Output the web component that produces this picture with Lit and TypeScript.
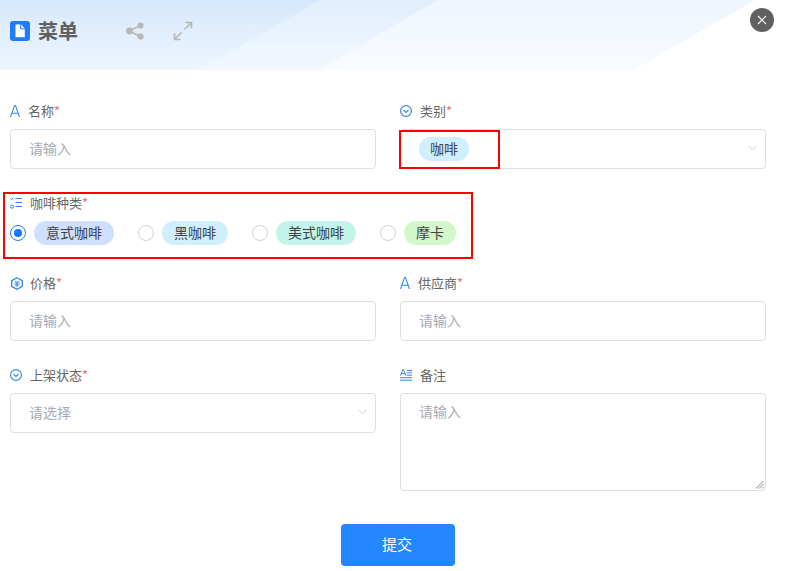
import { LitElement, html, css, svg } from "lit";
import { customElement } from "lit/decorators.js";

const textIcon = html`<svg class="ic a" viewBox="0 0 10 12"><path d="M.5 12 L4.6 .4 H5.4 L9.5 12 M1.9 8.2 H8.1" fill="none" stroke="#2f86f0" stroke-width="1.05"/></svg>`;
const chevIcon = html`<svg class="ic" viewBox="0 0 12 12"><circle cx="6" cy="6" r="5.4" fill="none" stroke="#2f86f0" stroke-width="1.15"/><path d="M3.5 5 L6 7.5 L8.5 5" fill="none" stroke="#2f86f0" stroke-width="1.15"/></svg>`;
const hexIcon = html`<svg class="ic hex" viewBox="0 0 12 13"><path d="M6 .7 L11.3 3.6 V9.4 L6 12.3 L.7 9.4 V3.6 Z" fill="none" stroke="#2f86f0" stroke-width="1.3"/><path d="M4 3.6 L6 5.6 L8 3.6 M3.5 6 H8.5 M3.5 8 H8.5 M6 5.6 V10.2" fill="none" stroke="#2f86f0" stroke-width="1"/></svg>`;
const listIcon = html`<svg class="ic" viewBox="0 0 12 12"><path d="M.4 1.6 L1.6 2.8 L3.4 .4" fill="none" stroke="#2f86f0" stroke-width="1"/><circle cx="2" cy="9.6" r="1.6" fill="none" stroke="#2f86f0" stroke-width="1"/><path d="M5.4 1.5 H12 M5.4 5.5 H12 M5.4 9.5 H12" stroke="#2f86f0" stroke-width="1.05"/></svg>`;
const noteIcon = html`<svg class="ic" viewBox="0 0 12 12"><path d="M.4 6.6 L2.9 .4 H3.5 L6 6.6 M1.3 4.6 H5.1 M7 1.5 H12 M7 3.8 H12 M7 6.2 H12 M0 8.7 H12 M0 11.2 H12" fill="none" stroke="#2f86f0" stroke-width="1"/></svg>`;
const caret = html`<svg class="caret" viewBox="0 0 10 6"><path d="M.7 .7 L5 5 L9.3 .7" fill="none" stroke="#c9cbd0" stroke-width="1"/></svg>`;

@customElement("app-root")
export class AppRoot extends LitElement {
  static styles = css`
    :host {
      display: block;
      width: 789px;
      height: 571px;
      overflow: hidden;
      background: #fff;
      font-family: "Noto Sans CJK SC", "Liberation Sans", sans-serif;
      font-size: 14px;
      color: #606266;
    }
    .head {
      position: relative;
      height: 70px;
      display: flex;
      align-items: center;
      padding: 0 10px 8px;
      box-sizing: border-box;
      background: linear-gradient(180deg, #d6e8fd 0%, #eef6fe 100%);
    }
    .deco { position: absolute; left: 0; top: 0; width: 789px; height: 70px; }
    .logo, .title, .tool { position: relative; }
    .logo { width: 20px; height: 20px; flex: none; }
    .title { margin-left: 8px; font-size: 20px; font-weight: 700; color: #606060; line-height: 24px; width: 87px; }
    .tool { width: 20px; height: 20px; flex: none; }
    .tool + .tool { margin-left: 28px; }
    .close {
      position: absolute; left: 750px; top: 8px; width: 24px; height: 24px; border-radius: 50%;
      background: #606060; border: none; padding: 0; display: flex; align-items: center; justify-content: center;
    }
    .close svg { width: 10px; height: 10px; }
    .form {
      display: grid;
      grid-template-columns: 366px 366px;
      column-gap: 24px;
      padding: 30px 0 0 10px;
    }
    .field { display: flex; flex-direction: column; min-width: 0; }
    .label {
      display: flex; align-items: center; box-sizing: border-box; height: 22px;
      margin-bottom: 7px; line-height: 20px; color: #666; font-size: 13px;
    }
    .ic { width: 12px; height: 12px; flex: none; margin-right: 8px; }
    .ic.a { width: 10px; margin-right: 8px; }
    .ic.hex { height: 13px; margin-left: 1px; margin-right: 7px; }
    .req { color: #f56c6c; }
    .box {
      position: relative; box-sizing: border-box; height: 40px; border: 1px solid #dcdfe6; border-radius: 4px;
      display: flex; align-items: center; padding: 0 18px 2px; color: #a8abb2; background: #fff;
    }
    .box.area { height: 98px; align-items: flex-start; padding: 7px 18px 0; }
    .caret { position: absolute; right: 8px; top: 15px; width: 9px; height: 6px; }
    .grip { position: absolute; right: 1px; bottom: 1px; width: 9px; height: 9px; }
    .chip {
      display: inline-flex; align-items: center; box-sizing: border-box; height: 24px; border-radius: 12px;
      padding: 0 12px 2px; color: #3f4246; font-size: 14px; white-space: nowrap;
    }
    .chip.tight { padding: 0 11px 2px; }
    .blue { background: #cfe0fe; }
    .sky { background: #cfeefe; }
    .teal { background: #c2f4ea; }
    .green { background: #d3f7c8; }
    .mark { position: absolute; border: 2px solid #f00; box-sizing: border-box; pointer-events: none; }
    .mark.cat { left: -2px; top: 0; width: 101px; height: 39px; }
    .selcat { padding-bottom: 0; }
    .row-gap { margin-top: 23px; }
    .row-gap.after { margin-top: 13px; }
    .group {
      grid-column: 1 / span 2;
      width: 470px; box-sizing: border-box; height: 67px; border: 2px solid #f00;
      margin: 23px 0 0 -7px; padding: 0 0 0 5px;
    }
    .group .label { height: 20px; margin: 0; padding-bottom: 2px; line-height: 18px; }
    .radios { display: flex; align-items: center; margin-top: 7px; }
    .opt { display: flex; align-items: center; margin-right: 24px; }
    .radio { box-sizing: border-box; width: 16px; height: 16px; border-radius: 50%; border: 1px solid #d0d2d6; margin-right: 8px; flex: none; background: #fff; }
    .radio.on { border-color: #1f7cf6; display: flex; align-items: center; justify-content: center; }
    .radio.on::after { content: ""; width: 8px; height: 8px; border-radius: 50%; background: #1677ff; }
    .foot { grid-column: 1 / span 2; padding: 33px 0 0 331px; }
    .submit {
      width: 114px; height: 42px; border: none; border-radius: 4px; background: #2587ff; color: #fff;
      font: 15px "Noto Sans CJK SC", sans-serif; padding: 0 2px 4px 0;
    }
  `;

  private label(icon: unknown, text: string, req = true) {
    return html`<div class="label">${icon}<span>${text}</span>${req ? html`<span class="req">*</span>` : ""}</div>`;
  }

  private opt(text: string, cls: string, on = false) {
    return html`<div class="opt"><span class="radio ${on ? "on" : ""}"></span><span class="chip ${cls}">${text}</span></div>`;
  }

  render() {
    return html`
      <div class="head">
        <svg class="deco" viewBox="0 0 789 70">
          ${svg`<polygon points="320,0 789,0 789,70 200,70" fill="#ffffff" opacity="0.27"/>
                <polygon points="438,0 789,0 789,70 318,70" fill="#ffffff" opacity="0.45"/>
                <polygon points="755,0 789,0 789,70 634,70" fill="#ffffff"/>`}
        </svg>
        <svg class="logo" viewBox="0 0 20 20">
          <rect width="20" height="20" rx="3" fill="#1f7cf6"/>
          <path d="M5.5 3.6 H11 L14.8 7.4 V16.2 H5.5 Z" fill="#fff"/>
          <path d="M10.6 3.6 V7.8 H14.8" fill="none" stroke="#1f7cf6" stroke-width="1"/>
        </svg>
        <span class="title">菜单</span>
        <svg class="tool" viewBox="0 0 20 20">
          <path d="M4 10 L15.5 4.5 M4 10 L15.5 15.5" stroke="#b8b8b8" stroke-width="1.6"/>
          <circle cx="4.5" cy="10" r="3.4" fill="#b8b8b8"/><circle cx="15.5" cy="4.5" r="3.1" fill="#b8b8b8"/><circle cx="15.5" cy="15.5" r="3.1" fill="#b8b8b8"/>
        </svg>
        <svg class="tool" viewBox="0 0 20 20">
          <path d="M11.5 8.5 L18.5 1.5 M12.5 1.5 H18.5 V7.5 M8.5 11.5 L1.5 18.5 M1.5 12.5 V18.5 H7.5" fill="none" stroke="#b8b8b8" stroke-width="1.7"/>
        </svg>
        <button class="close" aria-label="关闭">
          <svg viewBox="0 0 10 10"><path d="M1 1 L9 9 M9 1 L1 9" stroke="#fff" stroke-width="1.1"/></svg>
        </button>
      </div>
      <div class="form">
        <div class="field">
          ${this.label(textIcon, "名称")}
          <div class="box">请输入</div>
        </div>
        <div class="field">
          ${this.label(chevIcon, "类别")}
          <div class="box selcat">
            <span class="chip sky tight">咖啡</span>
            ${caret}
            <span class="mark cat"></span>
          </div>
        </div>
        <div class="group">
          ${this.label(listIcon, "咖啡种类")}
          <div class="radios">
            ${this.opt("意式咖啡", "blue", true)}
            ${this.opt("黑咖啡", "sky")}
            ${this.opt("美式咖啡", "teal")}
            ${this.opt("摩卡", "green")}
          </div>
        </div>
        <div class="field row-gap after">
          ${this.label(hexIcon, "价格")}
          <div class="box">请输入</div>
        </div>
        <div class="field row-gap after">
          ${this.label(textIcon, "供应商")}
          <div class="box">请输入</div>
        </div>
        <div class="field row-gap">
          ${this.label(chevIcon, "上架状态")}
          <div class="box">请选择${caret}</div>
        </div>
        <div class="field row-gap">
          ${this.label(noteIcon, "备注", false)}
          <div class="box area">请输入
            <svg class="grip" viewBox="0 0 9 9"><path d="M8.5 1 L1 8.5 M8.5 4 L4 8.5 M8.5 7 L7 8.5" stroke="#666" stroke-width=".8"/></svg>
          </div>
        </div>
        <div class="foot"><button class="submit">提交</button></div>
      </div>
    `;
  }
}
